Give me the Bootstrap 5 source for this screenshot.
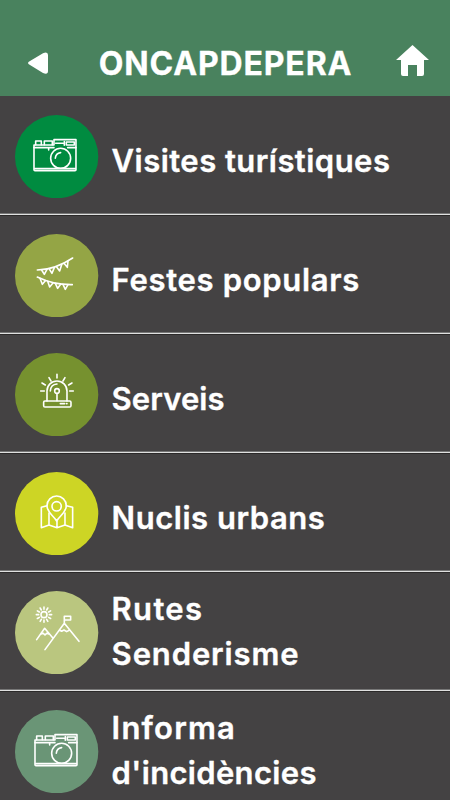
<!DOCTYPE html>
<html lang="ca">
<head>
<meta charset="utf-8">
<meta name="viewport" content="width=device-width, initial-scale=1">
<title>ONCAPDEPERA</title>
<link href="https://cdn.jsdelivr.net/npm/bootstrap@5.3.0/dist/css/bootstrap.min.css" rel="stylesheet">
<style>
body{background:#444243;font-family:Inter,"Open Sans",sans-serif;color:#fff;height:800px;overflow:hidden}
.topbar{background:#49825e;height:96px;padding:31px 21px 0 27px}
.title{font-size:32px;font-weight:700;line-height:66px;letter-spacing:.85px;padding-left:49.8px;-webkit-text-stroke:.3px #fff}
.arrow{width:22px;height:24px;margin-top:-2px}
.house{width:33px;height:31px;margin-top:-6px}
.entry{height:119px;border-bottom:1px solid #e0e0e0;box-shadow:0 1px 0 #2b2929,inset 0 -1px 0 #777;padding-left:15.3px;gap:13px}
.disc{width:83.3px;height:83.3px;margin-top:3px}
.label{font-size:31px;font-weight:600;line-height:44.6px;white-space:nowrap;-webkit-text-stroke:.35px #fff;padding-top:1.5px}
.single{padding-top:13px}
.art{fill:none;stroke:#fff;stroke-width:4.8;stroke-linecap:round;stroke-linejoin:round}
.fit-visites{letter-spacing:.46px}
.fit-festes{letter-spacing:.68px}
.fit-serveis{letter-spacing:.1px}
.fit-nuclis{letter-spacing:.53px}
.fit-rutes{letter-spacing:1.3px}
.fit-senderisme{letter-spacing:.87px}
.fit-informa{letter-spacing:1.2px}
.fit-incidencies{letter-spacing:.33px}
</style>
</head>
<body>
<header class="topbar d-flex align-items-center">
<svg class="arrow flex-shrink-0" viewBox="0 0 22 24"><path d="M3 10 16 2.2Q21 0 21 4V20Q21 24 16 22L3 14Q-1 12 3 10Z" fill="#fff"/></svg>
<h1 class="title m-0">ONCAPDEPERA</h1>
<svg class="house flex-shrink-0 ms-auto" viewBox="0 0 33 31"><path d="M16.5 0 33 15H28V29Q28 31 26 31H21V20H12V31H7Q5 31 5 29V15H0Z" fill="#fff"/></svg>
</header>
<main>
<div class="entry d-flex align-items-center">
<svg class="disc flex-shrink-0" viewBox="16 14 250 250"><circle cx="141" cy="139" r="125" fill="#008b40"/>
<g id="camera" class="art"><path d="M73 106V178Q73 181 76 181H196Q199 181 199 178V88H133V104H73Z"/><path d="M73 112H133M174 112H199M75 175H197M78 103V92H95V103M104 103V92H128V103M117 113V119M138 99H160M164 94V105"/><path d="M170 95H194V104H170Z"/><circle cx="153" cy="144" r="30"/><path d="M137 144Q138 129 153 127"/></g></svg>
<div class="label single fit-visites">Visites turístiques</div></div>

<div class="entry d-flex align-items-center">
<svg class="disc flex-shrink-0" viewBox="16 17 250 250"><circle cx="141" cy="142" r="125" fill="#94a545"/>
<g class="art"><path d="M83 125Q137 124 189 89M83 146Q132 170 188 169"/><path d="M96 125 104 138 112 123M119 122 127 135 134 118M141 116 150 128 156 109M163 105 173 117 175 99M91 150 98 168 107 157M114 159 120 176 130 164M137 165 144 180 153 168M160 168 167 183 175 169"/></g></svg>
<div class="label single fit-festes">Festes populars</div></div>

<div class="entry d-flex align-items-center">
<svg class="disc flex-shrink-0" viewBox="16 17 250 250"><circle cx="141" cy="142" r="125" fill="#76912f"/>
<g class="art"><rect x="102" y="161" width="82" height="18" rx="4"/><path d="M112 161V131A30 30 0 0 1 172 131V161M122 131Q123 112 142 110M142 139V160M152 169H165M171 169H172M142 81V92M118 91 124 101M166 91 160 101M97 107 107 113M187 107 177 113M93 131H104M180 131H191"/><circle cx="142" cy="131" r="7"/></g></svg>
<div class="label single fit-serveis">Serveis</div></div>

<div class="entry d-flex align-items-center">
<svg class="disc flex-shrink-0" viewBox="16 17 250 250"><circle cx="141" cy="142" r="125" fill="#cdd525"/>
<g class="art"><path d="M141 164C133 150 112 138 112 118A29 29 0 0 1 170 118C170 138 149 150 141 164Z"/><circle cx="141" cy="120" r="14"/><path d="M112 118 95 123V184L118 176 142 184 166 176 189 184V123L170 118M118 140V176M142 165V184M166 140V176"/></g></svg>
<div class="label single fit-nuclis">Nuclis urbans</div></div>

<div class="entry d-flex align-items-center">
<svg class="disc flex-shrink-0" viewBox="16 17 250 250"><circle cx="141" cy="142" r="125" fill="#bac67f"/>
<g class="art"><path d="M81 163 105 129 129 157M106 193 164 114 208 168M164 114V93H183V104H164M95 146 101 144 106 149 111 144 117 146M149 134 156 138 163 134 171 139 180 134"/><circle cx="103" cy="88" r="9"/><path d="M119 88H126M116.900 96 122.900 99.500M111 101.900 114.500 107.900M103 104V111M95 101.900 91.500 107.900M89.100 96 83.100 99.500M87 88H80M89.100 80 83.100 76.500M95 74.100 91.500 68.100M103 72V65M111 74.100 114.500 68.100M116.900 80 122.900 76.500"/></g></svg>
<div class="label"><div class="fit-rutes">Rutes</div><div class="fit-senderisme">Senderisme</div></div></div>

<div class="entry d-flex align-items-center">
<svg class="disc flex-shrink-0" viewBox="16 17 250 250"><circle cx="141" cy="142" r="125" fill="#6a9576"/><use href="#camera" x="3" y="3"/></svg>
<div class="label"><div class="fit-informa">Informa</div><div class="fit-incidencies">d'incidències</div></div></div>
</main>
</body>
</html>
